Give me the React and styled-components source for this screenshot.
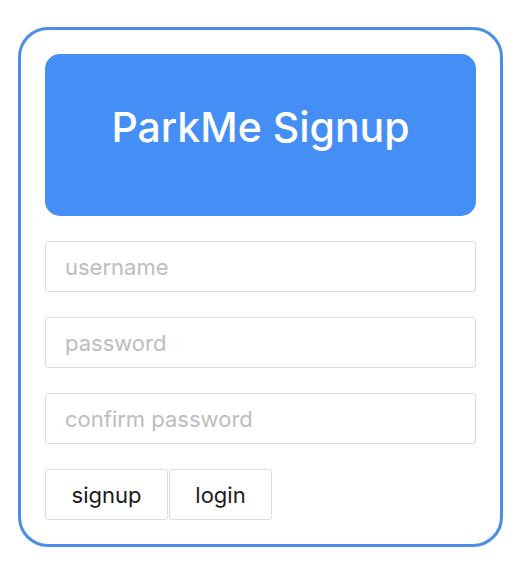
import styled, { createGlobalStyle } from "styled-components";

const GlobalStyle = createGlobalStyle`
  body {
    margin: 0;
    background: #ffffff;
    font-family: "Inter", "Helvetica Neue", Arial, sans-serif;
  }
`;

export default function App() {
  return (
    <>
      <GlobalStyle />
      <Page>
        <Card>
          <Header>
            <Title>ParkMe Signup</Title>
          </Header>
          <Form>
            <Field type="text" placeholder="username" />
            <Field type="password" placeholder="password" />
            <Field type="password" placeholder="confirm password" />
            <Buttons>
              <Button $width={123}>signup</Button>
              <Button $width={103}>login</Button>
            </Buttons>
          </Form>
        </Card>
      </Page>
    </>
  );
}

const Page = styled.div`
  padding: 27px 0 0 18px;
`;

const Card = styled.div`
  box-sizing: border-box;
  width: 485px;
  height: 520px;
  border: 3px solid #4a8fe6;
  border-radius: 30px;
  padding: 24px;
  display: flex;
  flex-direction: column;
  gap: 25px;
`;

const Header = styled.div`
  height: 162px;
  background-color: #448ef6;
  border-radius: 15px;
  display: flex;
  justify-content: center;
  align-items: center;
`;

const Title = styled.h1`
  margin: 0 0 16px;
  color: #ffffff;
  font-size: 41px;
  font-weight: 500;
`;

const Form = styled.div`
  display: flex;
  flex-direction: column;
  gap: 25px;
`;

const Field = styled.input`
  box-sizing: border-box;
  width: 100%;
  height: 51px;
  border: 1.5px solid #dcdcdc;
  border-radius: 3px;
  padding: 0 19px;
  font-family: "Inter", "Helvetica Neue", Arial, sans-serif;
  font-size: 22px;
  color: #222;
  outline: none;
  &::placeholder {
    color: #bdbdbd;
  }
`;

const Buttons = styled.div`
  display: flex;
  gap: 1px;
`;

const Button = styled.button`
  box-sizing: border-box;
  width: ${(p) => p.$width}px;
  height: 51px;
  background: #ffffff;
  border: 1.5px solid #dcdcdc;
  border-radius: 3px;
  font-family: "Inter", "Helvetica Neue", Arial, sans-serif;
  font-size: 22px;
  color: #1a1a1a;
  cursor: pointer;
`;
